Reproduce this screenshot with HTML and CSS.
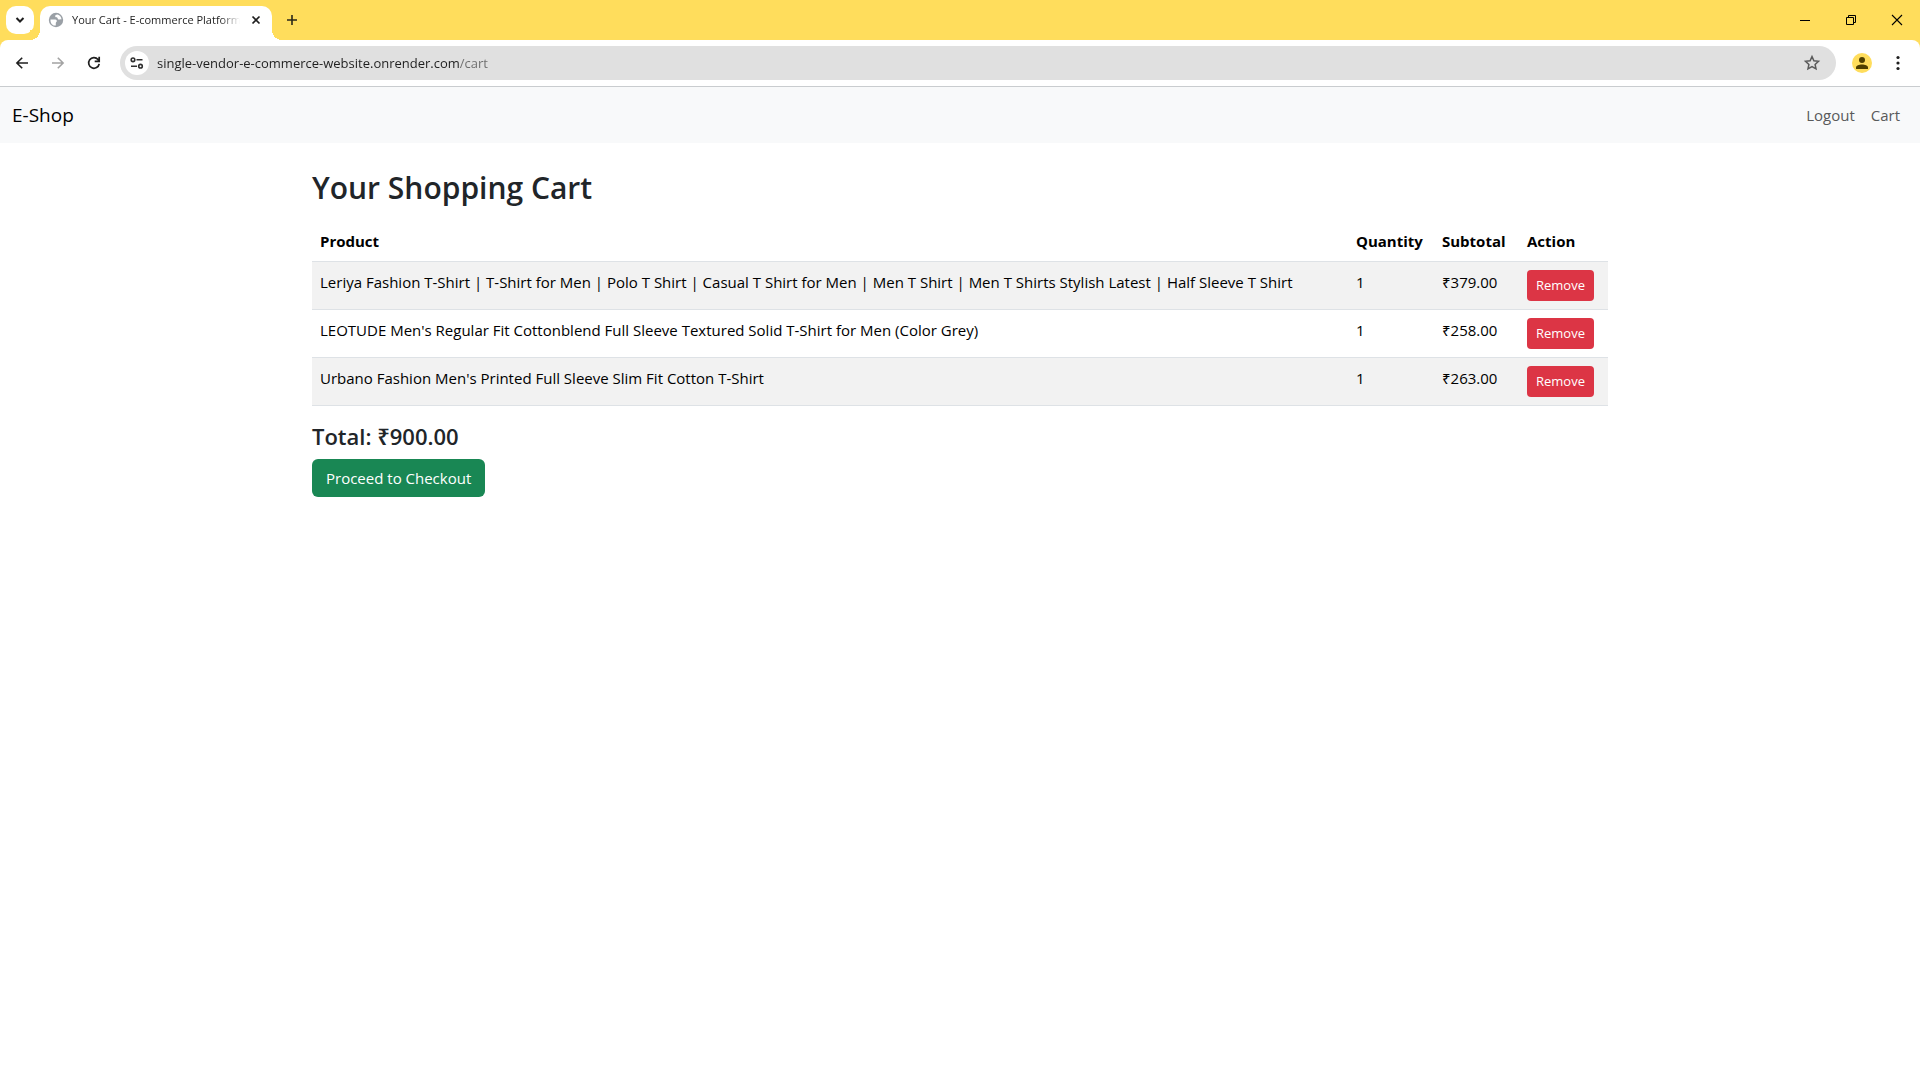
FILE: index.html
```html
<!DOCTYPE html>
<html lang="en">
<head>
  <meta charset="utf-8">
  <meta name="viewport" content="width=device-width, initial-scale=1">
  <title>Your Cart - E-commerce Platform</title>
  <link rel="stylesheet" href="styles.css">
</head>
<body>
  <header class="browser">
    <div class="tab-strip">
      <button class="tab-search" aria-label="Search tabs">
        <svg width="28" height="28" viewBox="0 0 28 28"><path d="M10.500 12l3.500 3.500 3.500-3.500" fill="none" stroke="#1f1f1f" stroke-width="2"/></svg>
      </button>
      <div class="tab">
        <svg class="favicon" width="16" height="16" viewBox="0 0 16 16">
          <circle cx="8" cy="8" r="7.200" fill="#9aa0a6"/>
          <path d="M2.500 7.500h4.800c1.200 0 1.500.8 1.500 1.600 0 1.100-1 1-1 1.900v2.500c-3 .6-5.600-2-5.300-6zM9.500 2.500c-1.700.2-2.300.8-2.300 1.700 0 1.200 1.200.9 1.900 1.300.8.500.4 1.700 1.400 2 .9.300 1.500-.4 3-.1-.1-2.200-1.600-4.300-4-4.900z" fill="#fff"/>
        </svg>
        <span class="tab-title">Your Cart - E-commerce Platform</span>
        <button class="tab-close" aria-label="Close tab">
          <svg width="16" height="16" viewBox="0 0 16 16"><path d="M4.500 4.500l7 7M11.500 4.500l-7 7" stroke="#1f1f1f" stroke-width="1.700"/></svg>
        </button>
      </div>
      <button class="new-tab" aria-label="New tab">
        <svg width="20" height="20" viewBox="0 0 20 20"><path d="M10 5v10M5 10h10" stroke="#2b2718" stroke-width="1.600"/></svg>
      </button>
      <div class="window-controls">
        <button aria-label="Minimize"><svg width="12" height="12" viewBox="0 0 12 12"><path d="M1 6.500h10" stroke="#000"/></svg></button>
        <button aria-label="Restore"><svg width="12" height="12" viewBox="0 0 12 12"><path d="M1.500 3.500h7v7h-7zM3.500 3.500v-2h7v7h-2" fill="none" stroke="#000"/></svg></button>
        <button aria-label="Close"><svg width="12" height="12" viewBox="0 0 12 12"><path d="M1 1l10 10M11 1L1 11" stroke="#000" stroke-width="1.100"/></svg></button>
      </div>
    </div>
    <div class="toolbar">
      <div class="nav-buttons">
        <button aria-label="Back"><svg width="16" height="16" viewBox="0 0 16 16"><path d="M14 8H3M8.200 2.700L2.900 8l5.300 5.300" fill="none" stroke="#1f1f1f" stroke-width="1.600"/></svg></button>
        <button aria-label="Forward" disabled><svg width="16" height="16" viewBox="0 0 16 16"><path d="M2 8h11M7.800 2.700L13.100 8l-5.300 5.300" fill="none" stroke="#a3a3a3" stroke-width="1.600"/></svg></button>
        <button aria-label="Reload"><svg width="16" height="16" viewBox="0 0 16 16"><path d="M13.200 8.800A5.300 5.300 0 1 1 12 4.500l1 1.200M13.200 1.800v4.500H8.700" fill="none" stroke="#1f1f1f" stroke-width="1.700"/></svg></button>
      </div>
      <div class="address-bar">
        <button class="site-info" aria-label="View site information">
          <svg width="24" height="24" viewBox="0 0 24 24"><g fill="none" stroke="#303030" stroke-width="1.600"><circle cx="8" cy="8.800" r="1.800"/><path d="M11.500 8.800h6M6 15.200h6"/><circle cx="15.500" cy="15.200" r="1.800"/></g></svg>
        </button>
        <input class="url" type="text" aria-label="Address" value="single-vendor-e-commerce-website.onrender.com/cart">
        <button class="bookmark" aria-label="Bookmark this page">
          <svg width="18" height="18" viewBox="0 0 18 18"><path d="M9 2.600l1.900 4.200 4.600.5-3.400 3.100.9 4.500L9 12.600l-4 2.300.9-4.500-3.400-3.100 4.600-.5z" fill="none" stroke="#5a5a5a" stroke-width="1.500"/></svg>
        </button>
      </div>
      <button class="profile" aria-label="Profile">
        <svg width="20" height="20" viewBox="0 0 20 20"><circle cx="10" cy="10" r="10" fill="#ffdd5c"/><circle cx="10" cy="7" r="3" fill="#4f3f00"/><path d="M4 16v-1.500C4 12.500 7 11.500 10 11.500s6 1 6 3V16z" fill="#4f3f00"/></svg>
      </button>
      <button class="menu" aria-label="Menu">
        <svg width="16" height="16" viewBox="0 0 16 16" fill="#1f1f1f"><circle cx="8" cy="2.500" r="1.600"/><circle cx="8" cy="8" r="1.600"/><circle cx="8" cy="13.500" r="1.600"/></svg>
      </button>
    </div>
  </header>

  <nav class="navbar">
    <a class="brand" href="#">E-Shop</a>
    <div class="nav-links">
      <a href="#">Logout</a>
      <a href="#">Cart</a>
    </div>
  </nav>

  <main class="container">
    <h2>Your Shopping Cart</h2>
    <table class="cart">
      <colgroup>
        <col>
        <col class="col-quantity">
        <col class="col-subtotal">
        <col class="col-action">
      </colgroup>
      <thead>
        <tr><th>Product</th><th>Quantity</th><th>Subtotal</th><th>Action</th></tr>
      </thead>
      <tbody>
        <tr>
          <td>Leriya Fashion T-Shirt | T-Shirt for Men | Polo T Shirt | Casual T Shirt for Men | Men T Shirt | Men T Shirts Stylish Latest | Half Sleeve T Shirt</td>
          <td>1</td><td>₹379.00</td><td><button class="btn btn-danger">Remove</button></td>
        </tr>
        <tr>
          <td>LEOTUDE Men's Regular Fit Cottonblend Full Sleeve Textured Solid T-Shirt for Men (Color Grey)</td>
          <td>1</td><td>₹258.00</td><td><button class="btn btn-danger">Remove</button></td>
        </tr>
        <tr>
          <td>Urbano Fashion Men's Printed Full Sleeve Slim Fit Cotton T-Shirt</td>
          <td>1</td><td>₹263.00</td><td><button class="btn btn-danger">Remove</button></td>
        </tr>
      </tbody>
    </table>
    <h4>Total: ₹900.00</h4>
    <a class="btn btn-success" href="#">Proceed to Checkout</a>
  </main>
</body>
</html>
```

FILE: styles.css
```css
* {
  box-sizing: border-box;
}

body {
  margin: 0;
  background: #fff;
  color: #212529;
  font-family: "Open Sans", "Noto Sans", sans-serif;
  font-size: 15px;
  line-height: 24px;
}

button {
  padding: 0;
  border: 0;
  background: none;
  color: inherit;
  font: inherit;
}

svg {
  display: block;
}

/* Browser window */

.browser {
  background: #ffdd5c;
  border-bottom: 1px solid #c9cccf;
}

.tab-strip {
  display: flex;
  align-items: center;
  height: 40px;
  padding-left: 6px;
}

.tab-search {
  border-radius: 10px;
  background: #fff;
}

.tab {
  position: relative;
  display: flex;
  align-items: center;
  align-self: flex-end;
  width: 232px;
  height: 34px;
  margin-left: 6px;
  padding: 0 8px 6px;
  border-radius: 10px 10px 0 0;
  background: #fff;
}

/* Curved feet on both sides of the active tab */
.tab::before,
.tab::after {
  content: "";
  position: absolute;
  bottom: 0;
  width: 10px;
  height: 10px;
}

.tab::before {
  right: 100%;
  background: radial-gradient(circle at 0 0, #ffdd5c 10px, #fff 10px);
}

.tab::after {
  left: 100%;
  background: radial-gradient(circle at 100% 0, #ffdd5c 10px, #fff 10px);
}

.favicon {
  flex: none;
}

.tab-title {
  flex: 1;
  margin: 0 8px;
  overflow: hidden;
  color: #1f1f1f;
  font-size: 11px;
  white-space: nowrap;
  -webkit-mask-image: linear-gradient(to left, transparent, #000 20px);
  mask-image: linear-gradient(to left, transparent, #000 20px);
}

.new-tab {
  margin-left: 10px;
}

.window-controls {
  display: flex;
  align-self: stretch;
  margin-left: auto;
}

.window-controls button {
  display: grid;
  place-items: center;
  width: 46px;
}

.toolbar {
  display: flex;
  align-items: center;
  height: 46px;
  padding: 0 14px;
  border-radius: 8px 8px 0 0;
  background: #fff;
}

.nav-buttons {
  display: flex;
  gap: 20px;
  margin-right: 18px;
}

.address-bar {
  display: flex;
  flex: 1;
  align-items: center;
  height: 34px;
  padding: 0 15px 0 5px;
  border-radius: 17px;
  background: #e0e0e0;
}

.site-info {
  border-radius: 50%;
  background: #fff;
}

/* The path after the host name is dimmed */
.url {
  flex: 1;
  min-width: 0;
  margin: 0 8px;
  padding: 0;
  border: 0;
  outline: 0;
  background: linear-gradient(to right, #1f1f1f 302px, #6b6b6b 302px);
  -webkit-background-clip: text;
  background-clip: text;
  color: #1f1f1f;
  -webkit-text-fill-color: transparent;
  font: 13px/24px "Open Sans", "Noto Sans", sans-serif;
}

.profile {
  margin-left: 16px;
}

.menu {
  margin-left: 18px;
}

/* Shop */

.navbar {
  display: flex;
  align-items: center;
  justify-content: space-between;
  padding: 8px 12px;
  background: #f8f9fa;
}

a {
  text-decoration: none;
}

.brand {
  padding: 4px 0;
  color: #000;
  font-size: 19px;
  line-height: 32px;
}

.nav-links a {
  display: inline-block;
  padding: 8px;
  color: #595a5b;
}

.nav-links {
  display: flex;
}

.container {
  max-width: 1320px;
  margin: 26px auto 0;
  padding: 0 12px;
}

h2,
h4 {
  margin: 0;
  font-weight: 600;
}

h2 {
  margin-bottom: 14px;
  font-size: 30px;
  line-height: 38px;
}

h4 {
  margin-bottom: 8px;
  font-size: 22px;
  line-height: 29px;
}

.cart {
  width: 100%;
  margin-bottom: 16px;
  border-collapse: collapse;
  color: #000;
}

.cart th,
.cart td {
  padding: 8px;
  border-bottom: 1px solid #dee2e6;
  text-align: left;
  vertical-align: top;
}

.cart tbody tr:nth-child(odd) {
  background: #f2f2f2;
}

.col-quantity {
  width: 86px;
}

.col-subtotal {
  width: 85px;
}

.col-action {
  width: 89px;
}

.btn {
  display: inline-block;
  color: #fff;
}

.btn-danger {
  display: block;
  padding: 5px 9px;
  border-radius: 4px;
  background: #dc3545;
  font-size: 13px;
  line-height: 21px;
}

.btn-success {
  padding: 7px 14px;
  border-radius: 6px;
  background: #198754;
}
```
